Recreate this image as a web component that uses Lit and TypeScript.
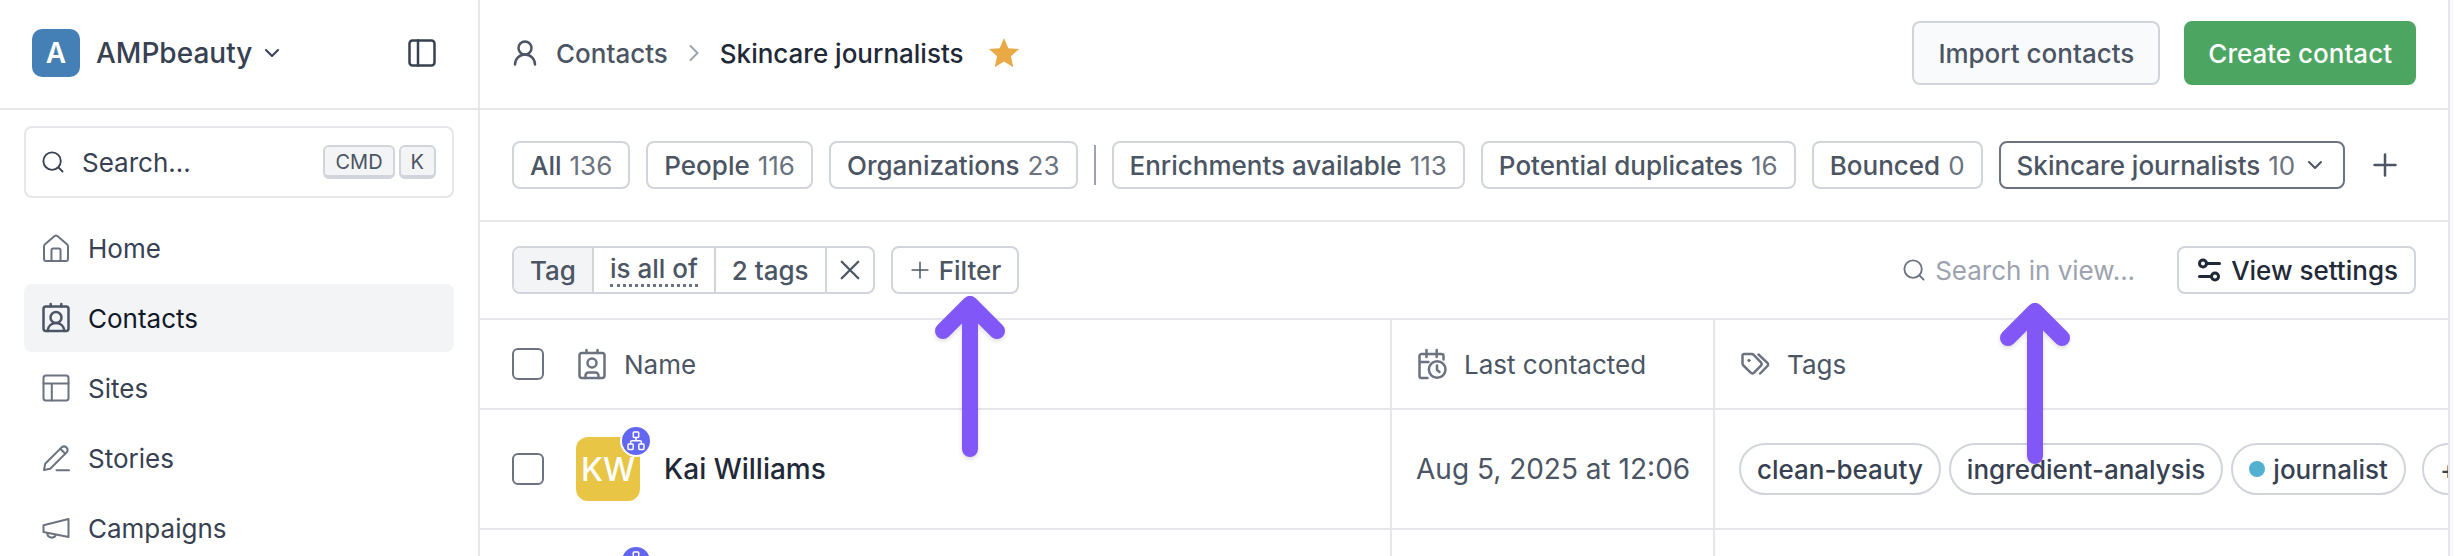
import { LitElement, html, css, svg, nothing, type TemplateResult } from "lit";
import { customElement, property } from "lit/decorators.js";
import { classMap } from "lit/directives/class-map.js";

/* Icons are drawn on a 28 x 28 grid unless a box is given. */
const icons: Record<string, { box?: string; shape: TemplateResult }> = {
  chevronDown: { box: "0 0 16 16", shape: svg`<path d="M2 5l6 6 6-6"/>` },
  chevronRight: { box: "0 0 20 20", shape: svg`<path d="M6.500 3l7 7-7 7"/>` },
  panel: { shape: svg`<rect x="1.5" y="1.5" width="25" height="25" rx="3"/><path d="M10 1.5v25"/>` },
  search: { box: "0 0 24 24", shape: svg`<circle cx="11" cy="11" r="9.500"/><path d="M18 18L22.500 22.500"/>` },
  home: { shape: svg`<path d="M2 12.5c0-.9.4-1.700 1-2.300L12.300 2.300c1-.9 2.400-.9 3.400 0L25 10.200c.6.6 1 1.400 1 2.300V25a2 2 0 0 1-2 2H4a2 2 0 0 1-2-2z"/><path d="M9.500 27V16a1.500 1.500 0 0 1 1.500-1.500h6a1.500 1.500 0 0 1 1.500 1.500v11"/>` },
  contacts: { shape: svg`<rect x="1.500" y="2.500" width="25" height="24.500" rx="2.500"/><path d="M8.700 0v2.500M19.300 0v2.500"/><circle cx="14" cy="13.500" r="5.500"/><path d="M5.500 27c.6-5 4-8 8.500-8s7.900 3 8.500 8"/>` },
  sites: { shape: svg`<rect x="1.500" y="1.500" width="25" height="25" rx="2.500"/><path d="M1.500 9.500h25M9.800 9.500v17"/>` },
  stories: { shape: svg`<path d="M2 26l1.200-6.200L19.900 3.100a3.600 3.600 0 0 1 5 5L8.200 24.800z"/><path d="M18.300 4.800l5 5M14.500 26.300H27"/>` },
  campaigns: { shape: svg`<path d="M1.500 11.300L26.500 5v18l-25-5z"/><path d="M5.300 19a4.500 4.500 0 0 0 8.700 1.700"/>` },
  person: { box: "0 0 24 26", shape: svg`<circle cx="12" cy="8" r="6.500"/><path d="M2 24.500c0-5.500 4.500-10 10-10s10 4.500 10 10"/>` },
  plus: { box: "0 0 24 24", shape: svg`<path d="M12 1.500v21M1.500 12h21"/>` },
  close: { box: "0 0 24 24", shape: svg`<path d="M3 3l18 18M21 3L3 21"/>` },
  sliders: { box: "0 0 24 24", shape: svg`<circle cx="6" cy="5.500" r="3.500"/><path d="M9.500 5.500H22.500M2.500 18.500h12"/><circle cx="18" cy="18.500" r="3.500"/>` },
  badge: { shape: svg`<rect x="1.500" y="3" width="25" height="25" rx="2.500"/><path d="M8.500 0v3M19.500 0v3"/><circle cx="14" cy="13" r="4.500"/><path d="M7.500 28v-2.500a3 3 0 0 1 3-3h7a3 3 0 0 1 3 3V28"/>` },
  calendar: { shape: svg`<path d="M9.500 28H3.500a2 2 0 0 1-2-2V6a2 2 0 0 1 2-2h20a2 2 0 0 1 2 2v3.500M1.500 12h9M8.500 0v7M18.700 0v7"/><circle cx="19.200" cy="19.500" r="8.300"/><path d="M19 15.500v4.500l2.500 2"/>` },
  tags: { shape: svg`<path d="M1.500 5.500a1.500 1.500 0 0 1 1.500-1.500h7.500c.8 0 1.600.3 2.200.9l7.200 7.400a2.400 2.400 0 0 1 0 3.400l-6.800 7a2.400 2.400 0 0 1-3.400 0L2.400 15.500c-.6-.6-.9-1.300-.9-2.200z"/><path d="M17.500 4.500l8.900 8.300a2.200 2.200 0 0 1 0 3.200l-7.200 7.500"/><circle class="fill" cx="8" cy="10.500" r="1.200"/>` },
  org: { box: "0 0 20 20", shape: svg`<rect x="7.300" y="1" width="5.400" height="5.400" rx=".8"/><rect x="2" y="13" width="5.200" height="5.400" rx=".8"/><rect x="12.800" y="13" width="5.200" height="5.400" rx=".8"/><path d="M10 6.400v3.300M4.600 13v-1.800a1.500 1.500 0 0 1 1.500-1.500h7.800a1.500 1.500 0 0 1 1.500 1.500V13"/>` },
};

@customElement("ui-icon")
export class UiIcon extends LitElement {
  @property() name = "";
  static styles = css`
    :host { display: inline-flex; flex: none; width: 28px; height: 28px; }
    svg {
      width: 100%; height: 100%; overflow: visible; fill: none;
      stroke: currentColor; stroke-width: var(--stroke, 2);
      stroke-linecap: round; stroke-linejoin: round;
    }
    .fill { fill: currentColor; stroke-width: 1; }
  `;
  render() {
    const icon = icons[this.name];
    return icon
      ? html`<svg viewBox=${icon.box ?? "0 0 28 28"} aria-hidden="true">${icon.shape}</svg>`
      : nothing;
  }
}

@customElement("pointer-arrow")
export class PointerArrow extends LitElement {
  static styles = css`
    :host { display: block; width: 70px; height: 161px; pointer-events: none; }
    svg {
      display: block; overflow: visible; fill: none; stroke: #8257f8;
      stroke-width: 16; stroke-linecap: round; stroke-linejoin: round;
      filter: drop-shadow(0 2px 2px rgb(0 0 0 / 0.14));
    }
  `;
  render() {
    return html`<svg width="70" height="161" viewBox="0 0 70 161" aria-hidden="true">
      <path d="M35 153V8M8 35L35 8L62 35" />
    </svg>`;
  }
}

const base = css`
  *, *::before, *::after { box-sizing: border-box; }
  button, input {
    font: inherit; color: inherit; margin: 0; padding: 0;
    background: none; border: 0; cursor: pointer;
  }
  a { color: inherit; text-decoration: none; }
`;

@customElement("app-sidebar")
export class AppSidebar extends LitElement {
  private links = [
    { icon: "home", label: "Home" },
    { icon: "contacts", label: "Contacts", active: true },
    { icon: "sites", label: "Sites" },
    { icon: "stories", label: "Stories" },
    { icon: "campaigns", label: "Campaigns" },
  ];

  static styles = [base, css`
    :host { display: block; background: #fff; border-right: 2px solid #e5e7eb; }
    .head {
      display: flex; align-items: center; justify-content: space-between;
      height: 110px; padding: 0 42px 2px 32px; border-bottom: 2px solid #e5e7eb;
    }
    .workspace {
      display: flex; align-items: center; gap: 16px;
      font-size: 28px; font-weight: 500; color: #374151;
    }
    .logo {
      display: grid; place-items: center; width: 48px; height: 48px;
      border-radius: 10px; background: #447fb5; color: #fff; font-weight: 600;
    }
    .workspace ui-icon { width: 16px; height: 16px; margin-left: -4px; }
    .toggle { display: flex; color: #374151; --stroke: 2.5; }
    .body { padding: 16px 24px 0; }
    .search {
      display: flex; align-items: center; width: 100%; height: 72px;
      padding: 0 16px; border: 2px solid #e5e7eb; border-radius: 8px;
      color: #374151; font-size: 26px;
    }
    .search ui-icon { width: 22px; height: 22px; margin-right: 18px; }
    .keys { display: flex; gap: 4px; margin-left: auto; }
    kbd {
      height: 34px; padding: 0 10px; font: inherit; font-size: 20px; line-height: 30px;
      color: #4b5563; background: #f3f4f6; border: 2px solid #d1d5db;
      border-bottom-width: 4px; border-radius: 6px;
    }
    nav { display: flex; flex-direction: column; gap: 2px; margin-top: 16px; }
    .link {
      display: flex; align-items: center; gap: 18px; height: 68px;
      padding: 0 18px; border-radius: 8px; font-size: 26px; color: #374151;
    }
    .link ui-icon { color: #6b7280; }
    .active { background: #f3f4f6; color: #111827; }
    .active ui-icon { color: #4b5563; --stroke: 2.5; }
  `];

  render() {
    return html`
      <div class="head">
        <button class="workspace">
          <span class="logo">A</span>AMPbeauty<ui-icon name="chevronDown"></ui-icon>
        </button>
        <button class="toggle" aria-label="Toggle sidebar"><ui-icon name="panel"></ui-icon></button>
      </div>
      <div class="body">
        <button class="search">
          <ui-icon name="search"></ui-icon>Search...
          <span class="keys"><kbd>CMD</kbd><kbd>K</kbd></span>
        </button>
        <nav>
          ${this.links.map((l) => html`
            <a href="#" class=${classMap({ link: true, active: !!l.active })}>
              <ui-icon name=${l.icon}></ui-icon>${l.label}
            </a>`)}
        </nav>
      </div>`;
  }
}

@customElement("contacts-page")
export class ContactsPage extends LitElement {
  private views = [
    { label: "All", count: 136 },
    { label: "People", count: 116 },
    { label: "Organizations", count: 23, last: true },
    { label: "Enrichments available", count: 113 },
    { label: "Potential duplicates", count: 16 },
    { label: "Bounced", count: 0 },
    { label: "Skincare journalists", count: 10, active: true },
  ];

  private rows = [
    {
      name: "Kai Williams", initials: "KW", contacted: "Aug 5, 2025 at 12:06",
      tags: [{ label: "clean-beauty" }, { label: "ingredient-analysis" }, { label: "journalist", dot: true }],
      more: "+",
    },
    { name: "", initials: "", contacted: "", tags: [], more: "" },
  ];

  static styles = [base, css`
    :host {
      display: block; min-width: 0; overflow: hidden; color: #4b5563; background: #fff;
      border-right: 2px solid #e5e7eb; font-size: 26px;
    }
    .head, .views, .filters {
      display: flex; align-items: center; padding: 0 32px;
      border-bottom: 2px solid #e5e7eb;
    }
    .head { height: 110px; padding-bottom: 2px; font-weight: 500; }
    .crumbs { display: flex; align-items: center; gap: 16px; margin-right: auto; }
    .crumbs a { display: flex; align-items: center; gap: 18px; }
    .crumbs a ui-icon { width: 26px; height: 26px; --stroke: 2.5; }
    .crumbs > ui-icon { width: 20px; height: 20px; color: #9ca3af; }
    h1 { margin: 0; font: inherit; color: #1f2937; }
    .star { display: flex; margin-left: 8px; color: #e9a944; }
    .star svg { width: 32px; height: 32px; fill: currentColor; }
    .action {
      height: 64px; padding: 0 24px; border: 2px solid #d1d5db;
      border-radius: 8px; background: #f9fafb; white-space: nowrap;
    }
    .primary { margin-left: 24px; padding: 0 22px; background: #4ca560; border-color: #4ca560; color: #fff; }

    .views { height: 112px; gap: 16px; }
    .chip {
      display: flex; align-items: center; height: 48px; padding: 0 16px; gap: 8px;
      border: 2px solid #d1d5db; border-radius: 8px; white-space: nowrap; font-weight: 500;
    }
    .count { font-weight: 400; color: #6b7280; }
    .current { border-color: #6b7280; }
    .chip ui-icon { width: 16px; height: 16px; margin: 0 4px; }
    .bar { width: 2px; height: 40px; background: #9ca3af; }
    .add { display: flex; padding: 12px; }
    .add ui-icon { width: 24px; height: 24px; --stroke: 2.5; }

    .filters { height: 98px; gap: 16px; }
    .rule {
      display: flex; height: 48px; border: 2px solid #d1d5db;
      border-radius: 8px; overflow: hidden; font-weight: 500;
    }
    .rule > * { display: flex; align-items: center; padding: 0 16px; white-space: nowrap; }
    .rule > * + * { border-left: 2px solid #d1d5db; }
    .field { background: #f3f4f6; }
    .operator { border-bottom: 3px dotted #6b7280; line-height: 30px; }
    .rule .remove { padding: 0 12px; }
    .remove ui-icon { width: 22px; height: 22px; --stroke: 2.5; }
    .anchor { position: relative; }
    .pointer { position: absolute; z-index: 1; top: 50px; left: 44px; }
    .chip .small { width: 18px; height: 18px; margin: 0 2px; }
    .find { display: flex; align-items: center; gap: 10px; margin-left: auto; color: #6b7280; }
    .find ui-icon { width: 22px; height: 22px; }
    .find input { width: 226px; outline: 0; cursor: text; color: #1f2937; }
    .find input::placeholder { color: #9ca3af; opacity: 1; }
    .find .pointer { top: 48px; left: 97px; }
    .settings { padding: 0 16px 0 18px; color: #1f2937; }
    .chip .knobs { width: 24px; height: 24px; margin: 0 2px 0 0; --stroke: 3; }

    table { width: 100%; table-layout: fixed; border-collapse: separate; border-spacing: 0; }
    .col-contacted { width: 323px; }
    .col-tags { width: 733px; }
    th, td {
      height: 120px; padding: 0 24px; border-bottom: 2px solid #e5e7eb;
      border-right: 2px solid #e5e7eb; overflow: hidden; white-space: nowrap;
      text-align: left; font-weight: 400;
    }
    th { height: 90px; }
    th:last-child, td:last-child { border-right: 0; padding-right: 0; }
    th:first-child, td:first-child { padding-left: 32px; }
    .cell { display: flex; align-items: center; }
    th ui-icon { color: #6b7280; margin: 0 18px 0 2px; --stroke: 2.5; }
    input[type="checkbox"] {
      appearance: none; flex: none; width: 32px; height: 32px;
      margin-right: 32px; border: 2px solid #6b7280; border-radius: 6px; background: #fff;
    }
    td { font-size: 28px; }
    .avatar {
      position: relative; display: grid; place-items: center; width: 64px; height: 64px;
      margin-right: 24px; border-radius: 12px; background: #e8c545;
      color: #fff; font-size: 32px; font-weight: 500;
    }
    .mark {
      position: absolute; top: -12px; right: -12px; display: grid; place-items: center;
      width: 32px; height: 32px; border: 2px solid #fff; border-radius: 50%;
      background: #6366f1; color: #fff;
    }
    .mark ui-icon { width: 20px; height: 20px; --stroke: 1.5; }
    .name { color: #1f2937; font-weight: 500; }
    .tags { gap: 8px; }
    .tag {
      display: flex; align-items: center; gap: 8px; flex: none; height: 52px; padding: 0 16px;
      border: 2px solid #d1d5db; border-radius: 26px; color: #374151;
      font-size: 26px; font-weight: 500;
    }
    .dot { width: 16px; height: 16px; border-radius: 50%; background: #52b1d0; }
    .more { margin-left: 8px; }
  `];

  render() {
    return html`
      <header class="head">
        <div class="crumbs">
          <a href="#"><ui-icon name="person"></ui-icon>Contacts</a>
          <ui-icon name="chevronRight"></ui-icon>
          <h1>Skincare journalists</h1>
          <button class="star" aria-label="Favourite">
            <svg viewBox="0 0 32 32"><path d="M16 1l4.300 10.200 10.700.9-8.100 7.100 2.400 11L16 24.400 6.700 30.200l2.400-11L1 12.100l10.700-.9z" /></svg>
          </button>
        </div>
        <button class="action">Import contacts</button>
        <button class="action primary">Create contact</button>
      </header>

      <div class="views">
        ${this.views.map((v) => html`
          <button class=${classMap({ chip: true, current: !!v.active })}>
            <span>${v.label}</span><span class="count">${v.count}</span>
            ${v.active ? html`<ui-icon name="chevronDown"></ui-icon>` : nothing}
          </button>
          ${v.last ? html`<span class="bar"></span>` : nothing}`)}
        <button class="add" aria-label="Add view"><ui-icon name="plus"></ui-icon></button>
      </div>

      <div class="filters">
        <div class="rule">
          <span class="field">Tag</span>
          <button><span class="operator">is all of</span></button>
          <button>2 tags</button>
          <button class="remove" aria-label="Remove filter"><ui-icon name="close"></ui-icon></button>
        </div>
        <div class="anchor">
          <button class="chip"><ui-icon class="small" name="plus"></ui-icon>Filter</button>
          <pointer-arrow class="pointer"></pointer-arrow>
        </div>
        <label class="find anchor">
          <ui-icon name="search"></ui-icon>
          <input type="text" aria-label="Search in view" placeholder="Search in view..." />
          <pointer-arrow class="pointer"></pointer-arrow>
        </label>
        <button class="chip settings"><ui-icon class="knobs" name="sliders"></ui-icon>View settings</button>
      </div>

      <table>
        <colgroup><col /><col class="col-contacted" /><col class="col-tags" /></colgroup>
        <thead>
          <tr>
            <th><div class="cell"><input type="checkbox" aria-label="Select all" /><ui-icon name="badge"></ui-icon>Name</div></th>
            <th><div class="cell"><ui-icon name="calendar"></ui-icon>Last contacted</div></th>
            <th><div class="cell"><ui-icon name="tags"></ui-icon>Tags</div></th>
          </tr>
        </thead>
        <tbody>
          ${this.rows.map((r) => html`
            <tr>
              <td><div class="cell">
                <input type="checkbox" aria-label="Select contact" />
                <span class="avatar">${r.initials}<span class="mark"><ui-icon name="org"></ui-icon></span></span>
                <span class="name">${r.name}</span>
              </div></td>
              <td>${r.contacted}</td>
              <td><div class="cell tags">
                ${r.tags.map((t: { label: string; dot?: boolean }) => html`
                  <span class="tag">${t.dot ? html`<span class="dot"></span>` : nothing}${t.label}</span>`)}
                ${r.more ? html`<span class="tag more">${r.more}</span>` : nothing}
              </div></td>
            </tr>`)}
        </tbody>
      </table>`;
  }
}

@customElement("app-root")
export class AppRoot extends LitElement {
  static styles = css`
    :host {
      display: grid; grid-template-columns: 480px minmax(0, 1fr);
      height: 100vh; overflow: hidden; padding-right: 4px; box-sizing: border-box;
      background: #fafafa; font-family: Inter, "Liberation Sans", sans-serif;
    }
  `;
  render() {
    return html`<app-sidebar></app-sidebar><contacts-page></contacts-page>`;
  }
}
